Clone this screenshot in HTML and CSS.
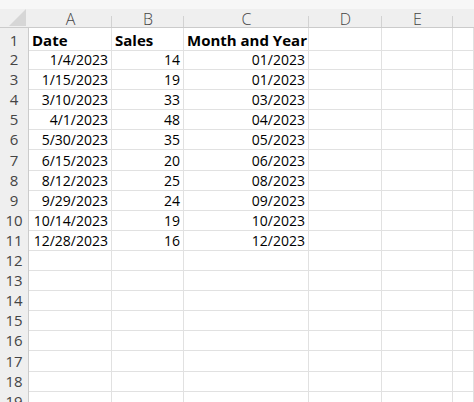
FILE: index.html
```html
<!DOCTYPE html>
<html>
    <head>
        <title>Sheet1</title>
        <link rel="stylesheet" href="styles.css">
    </head>
    <body>
        <div class="sheet">
          <div class="strip"></div>
          <div class="row head">
            <div class="corner">
              <svg width="18" height="17" viewBox="0 0 18 17"><polygon points="17,0 17,17 0,17" fill="#d6d6d6"/></svg>
            </div>
            <div class="col">A</div>
            <div class="col">B</div>
            <div class="col">C</div>
            <div class="col">D</div>
            <div class="col">E</div>
            <div class="col last"></div>
          </div>

          <div class="row"><div class="num">1</div><div class="cell bold">Date</div><div class="cell bold">Sales</div><div class="cell bold">Month and Year</div><div class="cell"></div><div class="cell"></div><div class="cell"></div></div>
          <div class="row"><div class="num">2</div><div class="cell r">1/4/2023</div><div class="cell r">14</div><div class="cell r">01/2023</div><div class="cell"></div><div class="cell"></div><div class="cell"></div></div>
          <div class="row"><div class="num">3</div><div class="cell r">1/15/2023</div><div class="cell r">19</div><div class="cell r">01/2023</div><div class="cell"></div><div class="cell"></div><div class="cell"></div></div>
          <div class="row"><div class="num">4</div><div class="cell r">3/10/2023</div><div class="cell r">33</div><div class="cell r">03/2023</div><div class="cell"></div><div class="cell"></div><div class="cell"></div></div>
          <div class="row"><div class="num">5</div><div class="cell r">4/1/2023</div><div class="cell r">48</div><div class="cell r">04/2023</div><div class="cell"></div><div class="cell"></div><div class="cell"></div></div>
          <div class="row"><div class="num">6</div><div class="cell r">5/30/2023</div><div class="cell r">35</div><div class="cell r">05/2023</div><div class="cell"></div><div class="cell"></div><div class="cell"></div></div>
          <div class="row"><div class="num">7</div><div class="cell r">6/15/2023</div><div class="cell r">20</div><div class="cell r">06/2023</div><div class="cell"></div><div class="cell"></div><div class="cell"></div></div>
          <div class="row"><div class="num">8</div><div class="cell r">8/12/2023</div><div class="cell r">25</div><div class="cell r">08/2023</div><div class="cell"></div><div class="cell"></div><div class="cell"></div></div>
          <div class="row"><div class="num">9</div><div class="cell r">9/29/2023</div><div class="cell r">24</div><div class="cell r">09/2023</div><div class="cell"></div><div class="cell"></div><div class="cell"></div></div>
          <div class="row"><div class="num">10</div><div class="cell r">10/14/2023</div><div class="cell r">19</div><div class="cell r">10/2023</div><div class="cell"></div><div class="cell"></div><div class="cell"></div></div>
          <div class="row"><div class="num">11</div><div class="cell r">12/28/2023</div><div class="cell r">16</div><div class="cell r">12/2023</div><div class="cell"></div><div class="cell"></div><div class="cell"></div></div>
          <div class="row"><div class="num">12</div><div class="cell"></div><div class="cell"></div><div class="cell"></div><div class="cell"></div><div class="cell"></div><div class="cell"></div></div>
          <div class="row"><div class="num">13</div><div class="cell"></div><div class="cell"></div><div class="cell"></div><div class="cell"></div><div class="cell"></div><div class="cell"></div></div>
          <div class="row"><div class="num">14</div><div class="cell"></div><div class="cell"></div><div class="cell"></div><div class="cell"></div><div class="cell"></div><div class="cell"></div></div>
          <div class="row"><div class="num">15</div><div class="cell"></div><div class="cell"></div><div class="cell"></div><div class="cell"></div><div class="cell"></div><div class="cell"></div></div>
          <div class="row"><div class="num">16</div><div class="cell"></div><div class="cell"></div><div class="cell"></div><div class="cell"></div><div class="cell"></div><div class="cell"></div></div>
          <div class="row"><div class="num">17</div><div class="cell"></div><div class="cell"></div><div class="cell"></div><div class="cell"></div><div class="cell"></div><div class="cell"></div></div>
          <div class="row"><div class="num">18</div><div class="cell"></div><div class="cell"></div><div class="cell"></div><div class="cell"></div><div class="cell"></div><div class="cell"></div></div>
          <div class="row"><div class="num">19</div><div class="cell"></div><div class="cell"></div><div class="cell"></div><div class="cell"></div><div class="cell"></div><div class="cell"></div></div>
        </div>
    </body>
</html>
```

FILE: styles.css
```css
* {
    margin: 0;
    padding: 0;
    box-sizing: border-box;
}

body {
    background: white;
    font-family: "Open Sans", "Noto Sans", sans-serif;
    font-size: 14px;
    color: #000;
    overflow: hidden;
}

.sheet {
    width: 474px;
    height: 402px;
    overflow: hidden;
}

.strip {
    height: 9px;
    background: #f7f7f7;
}

.row {
    display: grid;
    grid-template-columns: 29px 83px 72px 125px 73px 71px 1fr;
    height: 20.1px;
}

.row.head {
    height: 19px;
    background: #efefef;
    border-bottom: 1px solid #cbcbcb;
}

.corner {
    display: flex;
    align-items: flex-end;
    justify-content: flex-end;
    padding: 0 2px 1px 0;
}

.col {
    display: flex;
    align-items: center;
    justify-content: center;
    padding-top: 1px;
    color: #444;
    font-size: 16px;
    font-weight: 300;
    line-height: 1;
    background: linear-gradient(#d2d2d2, #d2d2d2) right bottom / 1px 11px no-repeat;
}

.col.last {
    background: none;
}

.num {
    display: flex;
    align-items: center;
    justify-content: center;
    padding-top: 1px;
    background: #efefef;
    color: #444;
    border-right: 1px solid #cbcbcb;
    border-bottom: 1px solid #dedede;
    font-size: 15px;
}

.cell {
    display: flex;
    align-items: center;
    padding: 2px 3px 0;
    border-right: 1px solid #e1e1e1;
    border-bottom: 1px solid #e1e1e1;
    white-space: nowrap;
    overflow: hidden;
}

.cell.r {
    justify-content: flex-end;
}

.cell.bold {
    font-weight: bold;
    font-size: 15px;
    overflow: visible;
}
```
